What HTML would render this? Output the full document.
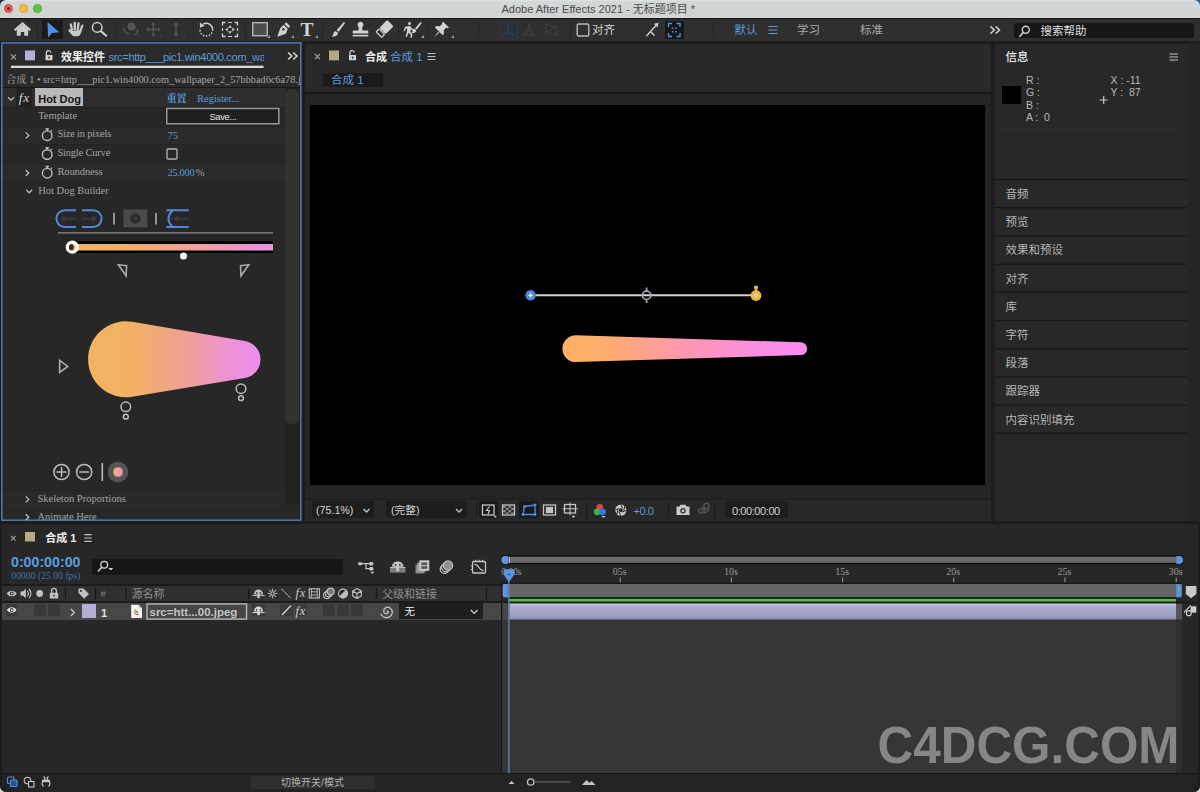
<!DOCTYPE html>
<html lang="zh">
<head>
<meta charset="utf-8">
<title>Adobe After Effects 2021</title>
<style>
*{margin:0;padding:0;box-sizing:border-box}
html,body{width:1200px;height:792px;overflow:hidden;background:#1c1c1c}
body{position:relative;font-family:"Liberation Sans","Noto Sans CJK SC",sans-serif;font-size:11px;color:#b4b4b4;line-height:1}
.a{position:absolute}
.t{position:absolute;white-space:nowrap;line-height:14px;height:14px}
.serif{font-family:"Liberation Serif","Noto Serif CJK SC",serif}
.blue{color:#5b9bd9}
.w{color:#e6e6e6}
svg{position:absolute;overflow:visible}
/* title bar */
#titlebar{left:0;top:0;width:1200px;height:18px;background:linear-gradient(#e4e6e6 0,#d4d7d7 1.500px,#cfd2d2 16px,#dadcdc 17px);border-radius:6px 6px 0 0}
#deskL{left:0;top:0;width:8px;height:8px;background:#1d2f55}
#deskR{left:1192px;top:0;width:8px;height:8px;background:#2b5ca4}
.tl{position:absolute;top:4.300px;width:9px;height:9px;border-radius:50%}
#toolbar{left:0;top:18px;width:1200px;height:22.700px;background:#2f2f2f;border-top:1.200px solid #121212}
/* panels */
.panel{position:absolute;background:#262626}
/* SECTION-MARKERS */
</style>
</head>
<body>
<!-- ===== TITLE BAR ===== -->
<div class="a" id="deskL"></div><div class="a" id="deskR"></div>
<div class="a" id="titlebar">
  <div class="tl" style="left:4.300px;background:#ee5b54;border:0.5px solid #d2453f"></div>
  <div class="tl" style="left:18.600px;background:#f6bd3c;border:0.5px solid #d8a02c"></div>
  <div class="tl" style="left:32.700px;background:#5fc544;border:0.5px solid #4aa632"></div>
  <div class="a" style="left:7.1px;top:7.1px;width:3.4px;height:3.4px;border-radius:50%;background:#7a1c14"></div>
  <div class="t" style="left:-1.700px;width:1200px;text-align:center;top:2px;font-size:11px;color:#4b4b4b">Adobe After Effects 2021 - 无标题项目 *</div>
</div>
<!-- ===== TOOLBAR ===== -->
<div class="a" id="toolbar"></div>
<!--TB-START-->
<div class="a" style="left:42px;top:20px;width:21px;height:19px;background:#1a1a1a"></div>
<div class="a" style="left:665px;top:21px;width:19px;height:18px;background:#171717"></div>
<div class="a" style="left:499.500px;top:21px;width:18px;height:18px;background:#2b3036;border:1px solid #303843"></div>
<div class="a" style="left:1014px;top:22.700px;width:180px;height:15px;background:#171717;border-radius:2px"></div>
<svg style="left:0;top:18px" width="1200" height="24" viewBox="0 18 1200 24" fill="none">
  <!-- grip -->
  <g stroke="#3a3a3a" stroke-width="1"><path d="M5.5 21v17" stroke-dasharray="1 1"/></g>
  <!-- separators -->
  <g stroke="#242424" stroke-width="1">
    <path d="M37.5 21v18M115.5 21v18M193.5 21v18M245.5 21v18M322.5 21v18M398.5 21v18M427.5 21v18M478.5 21v18M570.5 21v18M713.5 21v18"/>
  </g>
  <!-- home -->
  <g fill="#cdcdcd">
    <path d="M22.5 22l8.600 7.400-1.500 1.700-7.100-6.100-7.100 6.100-1.500-1.700z"/>
    <path d="M16.800 29.600l5.700-4.900 5.700 4.900v6.100h-4v-3.800h-3.400v3.800h-4z"/>
  </g>
  <!-- select arrow -->
  <path d="M47.500 21.800l11.700 10.400-7.200.8-4 4.800z" fill="#4c8fea"/>
  <!-- hand -->
  <g fill="#c9c9c9" transform="translate(-.7 -.5)">
    <rect x="71.6" y="23.6" width="2.3" height="8" rx="1.1" transform="rotate(-12 72.7 31)"/>
    <rect x="74.3" y="22.2" width="2.3" height="9" rx="1.1"/>
    <rect x="77.1" y="22.6" width="2.3" height="9" rx="1.1" transform="rotate(8 78.2 31)"/>
    <rect x="79.8" y="24.6" width="2.2" height="8" rx="1.1" transform="rotate(20 81 32)"/>
    <path d="M70.3 29.8c1.4-.6 2.4.6 3 1.8l8.8-1.2c0 3-1.2 5.8-3.4 6.4h-4.2c-1.8-.8-3.6-3.6-5.4-5.4-.5-.6.3-1.3 1.2-1.6z"/>
  </g>
  <!-- magnifier -->
  <g stroke="#cfcfcf"><circle cx="97.200" cy="27.400" r="4.800" stroke-width="1.500"/><path d="M100.900 31.100l5.300 4.600" stroke-width="2.100" stroke-linecap="round"/></g>
  <!-- orbit (dim) -->
  <g stroke="#555555" stroke-width="1.4" fill="none">
    <circle cx="131.5" cy="26.5" r="3.4" fill="#555555"/>
    <path d="M124 27.5c-1 3 1 6 5 6.5M137 29c1.6 2.4.4 5-2.6 6"/>
    <path d="M138 37l1.8-1.8v1.8z" fill="#555555" stroke="none"/>
  </g>
  <!-- move (dim) -->
  <g stroke="#555555" stroke-width="1.6" fill="#555555">
    <path d="M153.3 24.5v10M148.3 29.5h10" />
    <path d="M153.3 22l2.4 3h-4.8zM153.3 37l2.4-3h-4.8zM145.8 29.5l3-2.4v4.8zM160.8 29.5l-3-2.4v4.8z" stroke="none"/>
    <path d="M160 37.2l1.8-1.8v1.8z" stroke="none"/>
  </g>
  <!-- vertical (dim) -->
  <g stroke="#555555" stroke-width="1.6" fill="#555555">
    <path d="M176 25v9"/>
    <path d="M176 22l2.6 3.4h-5.2zM176 37l2.6-3.4h-5.2z" stroke="none"/>
    <path d="M183 37.2l1.8-1.8v1.8z" stroke="none"/>
  </g>
  <!-- rotate -->
  <g stroke="#cfcfcf" stroke-width="1.5" fill="none">
    <path d="M203 24.2a6.3 6.3 0 0 1 9.6 5.4"/>
    <path d="M212.6 29.6a6.3 6.3 0 1 1-12.4-1.4" stroke-dasharray="1.4 1.6"/>
    <path d="M199.8 22.6l.3 5 4.6-1.6z" fill="#cfcfcf" stroke="none"/>
  </g>
  <!-- pan behind -->
  <g stroke="#cfcfcf" stroke-width="1.3" fill="none">
    <path d="M222.5 25.5v-3h3M234.5 22.5h3v3M237.5 33.500v3h-3M225.5 36.5h-3v-3"/>
    <path d="M228 22.5h4M228 36.5h4M222.500 28v3M237.5 28v3" stroke-width="1.2"/>
    <path d="M230 25.2l2 2.500h-4zM230 33.800l2-2.500h-4zM225.200 29.500l2.500-2v4zM234.800 29.500l-2.500-2v4z" fill="#cfcfcf" stroke="none"/>
  </g>
  <!-- rect -->
  <rect x="252.700" y="22.700" width="14.600" height="13" fill="#4d4d4d" stroke="#bdbdbd" stroke-width="1.3"/>
  <path d="M267 38l3-3v3z" fill="#a0a0a0"/>
  <!-- pen -->
  <g fill="#d2d2d2">
    <path d="M286.200 22.200l4 4-1.700 1.700-4-4z"/>
    <path d="M283.600 24.800l4.200 4.200-2 4.800-8.600 3 3-8.600zM283.400 30.600a1.300 1.300 0 1 0-.1 0z" fill-rule="evenodd"/>
    <path d="M291 38l3-3v3z" fill="#a0a0a0"/>
  </g>
  <!-- T -->
  
  <path d="M315 38l3-3v3z" fill="#a0a0a0"/>
  <!-- brush -->
  <g fill="#d2d2d2">
    <path d="M343.800 22l1.400 1-6.600 8.800-2-1.500z"/>
    <path d="M335.900 31.200l2 1.600c.2 2.400-2.400 4.200-6.200 3.800 1.600-1 1.400-2.200 1.800-3.600.4-1.300 1.400-1.900 2.400-1.800z"/>
  </g>
  <!-- stamp -->
  <g fill="#d2d2d2">
    <path d="M360.500 21.800a2.900 2.900 0 0 1 2.200 4.800c-.6.800-.6 2.600-.2 4h4.600c.8 0 1.200.5 1.200 1.200v1.800h-15.600v-1.800c0-.7.400-1.200 1.200-1.200h4.600c.4-1.400.4-3.200-.2-4a2.900 2.900 0 0 1 2.200-4.800z"/>
    <rect x="352.700" y="34.800" width="15.600" height="1.600"/>
  </g>
  <!-- eraser -->
  <g>
    <g transform="rotate(45 384.200 29.300)"><rect x="379.700" y="20.600" width="9" height="11" rx="1.200" fill="#d2d2d2"/><rect x="380.300" y="32.600" width="7.800" height="4.200" rx=".9" fill="none" stroke="#d2d2d2" stroke-width="1.200"/></g>
    
  </g>
  <!-- roto -->
  <g fill="#d2d2d2">
    <circle cx="409.500" cy="23.600" r="1.500"/>
    <path d="M406 26.500l4-.6 2.600 3 2.400.2v1.300l-3-.2-1.300-1.300-.3 3 2 2.400-.6 3.400h-1.300l.3-3-2.200-2-1.800 4.400-1.300-.4 1.400-4.800.3-3.600-1.600.6-.6 2.400-1.200-.3.700-3.200z"/>
    <path d="M420.600 22l1.200.9-5 6.600-1.700-1.300z"/>
    <path d="M414.600 28.800l1.600 1.300c.2 2-1.800 3.400-4.800 3 1.200-.8 1-1.700 1.400-2.800.3-1 1-1.600 1.800-1.500z"/>
    <path d="M421 38l3-3v3z" fill="#a0a0a0"/>
  </g>
  <!-- pin -->
  <g fill="#d2d2d2">
    <path d="M443.400 22l5.600 5.600-1.400.6-1.500-.4-2.400 2.600.3 3.300-1.400 1.400-7.700-7.700 1.400-1.400 3.300.3 2.600-2.400-.4-1.500z"/>
    <path d="M438.400 31.800l.9.900-5.300 4.300z"/>
    <path d="M451 38l3-3v3z" fill="#a0a0a0"/>
  </g>
  <!-- axis icons (dim blue) -->
  <g stroke="#2c435e" stroke-width="1.100" fill="none">
    <path d="M508 24v7.500M508 31.500l-5.500 4M508 31.500l5.500 4"/>
    <path d="M508 22.500l1.800 2.400h-3.600zM501.500 36.300l.8-2.800 2 2.600zM514.500 36.300l-.8-2.800-2 2.600z" fill="#2c435e" stroke="none"/>
  </g>
  <g stroke="#3d4045" stroke-width="1" fill="none">
    <path d="M529 24v7M529 31l-5 4M529 31l5 4M524 35h10l-5-9z"/>
    <path d="M529 22.500l1.800 2.400h-3.600zM522.500 36.300l.8-2.800 2 2.600zM535.500 36.300l-.8-2.800-2 2.600z" fill="#3b3f45" stroke="none"/>
    <path d="M545.500 24.500l11 2.500v8l-11 -2.500zM545.500 32.500l11-6M544 23l3 3" />
  </g>
  <!-- snapping checkbox -->
  <rect x="577.200" y="24" width="11.600" height="12" rx="1.500" stroke="#b9b9b9" stroke-width="1.400"/>
  <!-- snap icon -->
  <g stroke="#cfcfcf" stroke-width="1.400" fill="none"><path d="M646.500 36l4-4.500 4 4M650.500 31.500l6-6.500"/><path d="M658.500 22.800l-1 4.600-3.600-3.600z" fill="#cfcfcf" stroke="none"/></g>
  <!-- bracket icon blue -->
  <g stroke="#4c8fea" stroke-width="1.400" fill="none">
    <path d="M668.500 27v-3.500h3.500M676.500 23.500h3.500v3.500M680 33v3.500h-3.500M672 36.500h-3.500v-3.500"/>
    <path d="M671.800 28.300h1.600M675.200 28.300h1.600M671.800 31.700h1.600M675.200 31.700h1.600" stroke-width="1.600"/>
  </g>
  <!-- workspace menu -->
  <path d="M768.500 26.500h9M768.500 30h9M768.500 33.500h9" stroke="#5b9bd9" stroke-width="1.200"/>
  <!-- >> -->
  <path d="M990.500 26.500l3.800 3.500-3.800 3.500M995.700 26.500l3.800 3.500-3.800 3.500" stroke="#d8d8d8" stroke-width="1.500"/>
  <!-- search icon -->
  <g stroke="#d0d0d0" stroke-width="1.400"><circle cx="1025.800" cy="29.800" r="3.500"/><path d="M1023.200 32.600l-3.400 3.600" stroke-linecap="round" stroke-width="1.600"/></g>
</svg>
<div class="t serif" style="left:299.800px;top:18.600px;width:14.500px;height:22px;line-height:22px;text-align:center;font-size:19.500px;font-weight:bold;color:#d2d2d2">T</div>
<div class="t" style="left:592px;top:23px;font-size:11.500px;color:#d0d0d0">对齐</div>
<div class="t blue" style="left:734.500px;top:23px;font-size:11.500px">默认</div>
<div class="t" style="left:797px;top:23px;font-size:11.500px;color:#a8a8a8">学习</div>
<div class="t" style="left:860px;top:23px;font-size:11.500px;color:#a8a8a8">标准</div>
<div class="t" style="left:1040.500px;top:23.500px;font-size:11.500px;color:#dedede">搜索帮助</div>
<!--TB-END-->
<!-- ===== LEFT PANEL ===== -->
<!--LP-START-->
<div class="panel" style="left:1px;top:42px;width:300.600px;height:479px;background:#272727;overflow:hidden">
</div><div class="a" style="left:2px;top:43px;width:298.500px;height:44px;background:#2a2a2a"></div>
<div class="a" id="lp" style="left:0;top:0;width:302px;height:521px;overflow:hidden">
  <!-- tab header -->
  <svg style="left:0;top:0" width="302" height="521" viewBox="0 0 302 521" fill="none">
    <path d="M11 54.500l5 5M16 54.500l-5 5" stroke="#9c9c9c" stroke-width="1.100"/>
    <rect x="25" y="50.500" width="10" height="9.800" fill="#b4afd9"/>
    <g fill="#d4d4d4"><rect x="45.500" y="55" width="7" height="5.300" rx=".6"/><path d="M46.400 55.200v-2.100a2.200 2.200 0 0 1 4.400-.5" stroke="#d4d4d4" stroke-width="1.200" fill="none"/><rect x="48.300" y="56.600" width="1.400" height="2" fill="#262626"/></g>
    <path d="M288 52.500l3.800 3.500-3.800 3.500M293.200 52.500l3.800 3.500-3.800 3.500" stroke="#d8d8d8" stroke-width="1.500"/>
    <rect x="11" y="65.700" width="252.500" height="2.300" fill="#d9d9d9"/>
  </svg>
  <div class="t w" style="left:61px;top:49.500px;font-size:11px;font-weight:bold;color:#f0f0f0">效果控件</div>
  <div class="t blue" style="left:108.500px;top:49.500px;font-size:11px;letter-spacing:-.3px;width:155.500px;overflow:hidden">src=<span>http___pic1.win4000.com_wallpaper</span></div>
  <div class="t serif" style="left:6px;top:72.500px;font-size:10.300px;color:#a4a4a4;width:293.500px;overflow:hidden">合成 1 • src=<span>http___pic1.win4000.com_wallpaper_2_57bbbad6c6a78.jpeg</span></div>
  <div class="a" style="left:2px;top:87px;width:298px;height:1px;background:#181818"></div>
  <!-- rows -->
  <div class="a" style="left:2px;top:88px;width:283px;height:19px;background:#2d2d2d"></div>
  <div class="a" style="left:2px;top:126px;width:283px;height:18px;background:#2a2a2a"></div>
  <div class="a" style="left:2px;top:163px;width:283px;height:18.500px;background:#2a2a2a"></div>
  <div class="a" style="left:2px;top:490px;width:283px;height:18px;background:#292929;border-top:1px solid #222"></div>
  <div class="a" style="left:2px;top:508px;width:283px;height:12px;border-top:1px solid #222"></div>
  <div class="a" style="left:2px;top:106.500px;width:283px;height:1px;background:#222"></div><div class="a" style="left:2px;top:125.500px;width:283px;height:1px;background:#222"></div><div class="a" style="left:2px;top:144px;width:283px;height:1px;background:#222"></div><div class="a" style="left:2px;top:162.500px;width:283px;height:1px;background:#222"></div><div class="a" style="left:2px;top:181.500px;width:283px;height:1px;background:#232323"></div>
  <!-- scrollbar -->
  <div class="a" style="left:284.500px;top:88px;width:15.500px;height:416px;background:#212121"></div>
  <div class="a" style="left:285.300px;top:89px;width:14px;height:334.500px;background:#323232;border-radius:6px"></div>
  <!-- hot dog row -->
  <div class="a" style="left:16px;top:88px;width:15.500px;height:18.500px;background:#222"></div>
  <div class="a" style="left:35px;top:88.300px;width:48.200px;height:17.900px;background:#b9b9b9"></div>
  <div class="t" style="left:38.200px;top:92px;font-size:11px;font-weight:bold;color:#141414">Hot Dog</div>
  <div class="t" style="left:18.800px;top:91px;font-size:13.500px;font-style:italic;color:#cfcfcf;font-family:'Liberation Serif',serif;letter-spacing:.6px">fx</div>
  <div class="t serif blue" style="left:166.500px;top:91.500px;font-size:10px;font-weight:bold">重置</div>
  <div class="t serif blue" style="left:197px;top:91.500px;font-size:10.500px">Register...</div>
  <div class="t serif" style="left:38.200px;top:108.500px;font-size:10.500px;color:#a3a3a3">Template</div>
  <div class="a" style="left:166px;top:107.700px;width:113.600px;height:16.800px;background:#1f1f1f"></div>
  <div class="t" style="left:166px;width:113.600px;text-align:center;top:109.800px;font-size:9.500px;letter-spacing:-.4px;color:#e2e2e2">Save...</div>
  <div class="t serif" style="left:57.400px;top:127px;font-size:10.500px;letter-spacing:-.2px;color:#a3a3a3">Size in pixels</div>
  <div class="t serif blue" style="left:167.400px;top:128.500px;font-size:10.500px">75</div>
  <div class="t serif" style="left:57.400px;top:146px;font-size:10.500px;letter-spacing:-.2px;color:#a3a3a3">Single Curve</div>
  <div class="t serif" style="left:57.400px;top:164.500px;font-size:10.500px;letter-spacing:-.1px;color:#a3a3a3">Roundness</div>
  <div class="t serif blue" style="left:167.400px;top:166px;font-size:10.500px;letter-spacing:-.3px">25.000<span style="color:#a3a3a3;margin-left:1.200px">%</span></div>
  <div class="t serif" style="left:38.200px;top:183.500px;font-size:10.500px;color:#a3a3a3">Hot Dog Builder</div>
  <div class="t serif" style="left:37.500px;top:491.500px;font-size:10.500px;color:#a3a3a3">Skeleton Proportions</div>
  <div class="t serif" style="left:37.500px;top:509.500px;font-size:10.500px;color:#a3a3a3">Animate Here</div>
  <svg style="left:0;top:0" width="302" height="521" viewBox="0 0 302 521" fill="none">
    <defs>
      <linearGradient id="hg" x1="88" y1="0" x2="260.500" y2="0" gradientUnits="userSpaceOnUse">
        <stop offset="0" stop-color="#f3b361"/><stop offset=".25" stop-color="#f2b064"/><stop offset=".55" stop-color="#f0a193"/><stop offset=".85" stop-color="#ec91dc"/><stop offset="1" stop-color="#ec8eea"/>
      </linearGradient>
      <linearGradient id="bg1" x1="72" y1="0" x2="273" y2="0" gradientUnits="userSpaceOnUse">
        <stop offset="0" stop-color="#f3b060"/><stop offset=".3" stop-color="#f2ad6c"/><stop offset=".6" stop-color="#f0a09a"/><stop offset="1" stop-color="#ec8fe4"/>
      </linearGradient>
      <linearGradient id="dot" x1="0" y1="0" x2="1" y2="0"><stop offset="0" stop-color="#f2b070"/><stop offset="1" stop-color="#ee96c8"/></linearGradient>
    </defs>
    <rect x="1.800" y="42.800" width="299" height="477.400" stroke="#4d73ad" stroke-width="1.600"/>
    <rect x="166.750" y="108.450" width="112.100" height="15.300" stroke="#979797" stroke-width="1.500"/>
    <!-- chevrons -->
    <g stroke="#bdbdbd" stroke-width="1.300">
      <path d="M8 97.200l3 3 3-3"/>
      <path d="M25.800 132.400l3 3-3 3"/>
      <path d="M25.800 170l3 3-3 3"/>
      <path d="M26.200 189.800l3 3 3-3"/>
      <path d="M25.800 496.400l3 3-3 3"/>
      <path d="M25.800 514.300l3 3-3 3"/>
    </g>
    <!-- stopwatches -->
    <g stroke="#bdbdbd" stroke-width="1.400">
      <circle cx="47.200" cy="135.700" r="4.800"/><path d="M45.500 129h3.400M47.200 129v1.900M50.900 131.300l1-1"/>
      <circle cx="47.200" cy="154.500" r="4.800"/><path d="M45.500 147.800h3.400M47.200 147.800v1.900M50.900 150.100l1-1"/>
      <circle cx="47.200" cy="173.200" r="4.800"/><path d="M45.500 166.500h3.400M47.200 166.500v1.900M50.900 168.800l1-1"/>
    </g>
    <rect x="167" y="149" width="10" height="10" rx="1" stroke="#b4b4b4" stroke-width="1.300"/>
    <!-- builder icons -->
    <g stroke="#3a3a3a" stroke-width="1.500"><path d="M64 218.700h12M82 218.700h11M170 218.700h18"/><circle cx="63.500" cy="218.700" r="1.800" fill="#3a3a3a"/><circle cx="93.500" cy="218.700" r="1.800" fill="#3a3a3a"/><circle cx="177" cy="218.700" r="1.600" fill="#3a3a3a"/></g>
    <g stroke="#5289d6" stroke-width="2">
      <path d="M76 210.200H64.800a8.400 8.400 0 0 0 0 16.800H76"/>
      <path d="M82 210.200h11.200a8.400 8.400 0 0 1 0 16.800H82"/>
      <path d="M188.800 210.200H166.300M166.300 227h22.500M172.500 210.200q-8 8.400 0 16.800"/>
    </g>
    <path d="M114 213v11.500M156 213v11.500" stroke="#b8b8b8" stroke-width="1.500"/>
    <rect x="123.500" y="209.500" width="23.800" height="17.700" fill="#4b4b4b"/>
    <circle cx="135.400" cy="218.400" r="5.200" fill="#2c2c2c"/><circle cx="135.400" cy="218.400" r="2" fill="#3d3d3d"/>
    <path d="M58 232.800h215" stroke="#8c8c8c" stroke-width="1.300"/>
    <!-- gradient bar -->
    <rect x="70" y="241.300" width="203" height="11.700" fill="#000"/>
    <rect x="72" y="244" width="201" height="6.500" fill="url(#bg1)"/>
    <circle cx="72.300" cy="247.200" r="6.600" fill="#fff"/>
    <circle cx="72.300" cy="247.200" r="3.300" fill="#f0b070"/>
    <path d="M72.300 243.900a3.300 3.300 0 0 0 0 6.600a5 5 0 0 0 0-6.600z" fill="#3a2a1c"/>
    <circle cx="183.500" cy="256" r="3.500" fill="#fff"/>
    <g stroke="#ababab" stroke-width="1.300" stroke-linejoin="miter">
      <path d="M118.300 264.700l8.300.9-.5 10.200z" stroke-width="1.600"/>
      <path d="M248.800 264.700l-8.300.9.500 10.200z" stroke-width="1.600"/>
      <path d="M59.700 360.400v12l8-6z" stroke-width="1.700"/>
    </g>
    <!-- big hot dog -->
    <path d="M132.200 321.800L244.800 341A18.750 18.750 0 0 1 244.800 378L132.200 396.800A38 38 0 1 1 132.200 321.800Z" fill="url(#hg)"/>
    <g stroke="#bcbcbc" stroke-width="1.500">
      <circle cx="125.800" cy="406.800" r="4.800"/><circle cx="125.800" cy="416.700" r="2.400"/>
      <circle cx="241" cy="388.700" r="4.800"/><circle cx="241" cy="398.200" r="2.400"/>
    </g>
    <!-- bottom icons -->
    <g stroke="#bcbcbc" stroke-width="1.500">
      <circle cx="61.500" cy="472" r="7.600"/><path d="M56.500 472h10M61.500 467v10"/>
      <circle cx="84.200" cy="472" r="7.600"/><path d="M79.200 472h10"/>
      <path d="M102.300 463v18" stroke-width="1.600"/>
    </g>
    <circle cx="118" cy="472" r="10.300" fill="#555"/>
    <circle cx="118" cy="472" r="4.800" fill="url(#dot)"/>
  </svg>
</div>
<!--LP-END-->
<!-- ===== COMP PANEL ===== -->
<!--CP-START-->
<div class="panel" style="left:304.600px;top:43.500px;width:686.400px;height:477.500px;background:#292929"></div>
<div class="a" style="left:304.600px;top:92px;width:686.400px;height:1.500px;background:#171717"></div>
<div class="a" style="left:304.600px;top:93.500px;width:686.400px;height:405.500px;background:#242424"></div><div class="a" style="left:304.600px;top:499px;width:686.400px;height:1.200px;background:#1d1d1d"></div>
<div class="a" style="left:310px;top:105px;width:675px;height:380px;background:#000"></div>
<div class="a" style="left:323px;top:72.500px;width:60px;height:14.500px;background:#1b1b1b"></div>
<div class="t" style="left:365px;top:49.500px;font-size:11px;font-weight:bold;color:#f0f0f0">合成</div>
<div class="t blue" style="left:390px;top:49.500px;font-size:11.500px">合成 1</div>
<div class="t blue" style="left:331px;top:72.500px;font-size:11.500px">合成 1</div>
<!-- footer -->
<div class="a" style="left:304.600px;top:500.200px;width:686.400px;height:20.800px;background:#282828"></div>
<div class="a" style="left:311.500px;top:501.300px;width:62px;height:16.500px;background:#1d1d1d;border-radius:2px"></div>
<div class="a" style="left:386px;top:501.300px;width:81px;height:16.500px;background:#1d1d1d;border-radius:2px"></div>
<div class="a" style="left:479px;top:501.300px;width:19px;height:16.500px;background:#1a1a1a"></div>
<div class="a" style="left:519px;top:501.300px;width:20px;height:16.500px;background:#1a1a1a"></div>
<div class="a" style="left:725px;top:501.300px;width:63px;height:16.500px;background:#1d1d1d;border-radius:2px"></div>
<div class="t" style="left:316px;top:502.800px;font-size:10.700px;color:#d6d6d6">(75.1%)</div>
<div class="t" style="left:391px;top:502.500px;font-size:10.700px;color:#d6d6d6">(完整)</div>
<div class="t blue" style="left:633.500px;top:504px;font-size:11px;letter-spacing:-.42px">+0.0</div>
<div class="t" style="left:732px;top:504px;font-size:11px;letter-spacing:-.42px;color:#d0d0d0">0:00:00:00</div>
<svg style="left:0;top:0" width="1200" height="530" viewBox="0 0 1200 530" fill="none">
  <defs>
    <linearGradient id="cg" x1="562" y1="0" x2="807" y2="0" gradientUnits="userSpaceOnUse">
      <stop offset="0" stop-color="#feb160"/><stop offset=".2" stop-color="#feab70"/><stop offset=".5" stop-color="#fe98b0"/><stop offset=".8" stop-color="#fc8ee0"/><stop offset="1" stop-color="#fb8af2"/>
    </linearGradient>
  </defs>
  <!-- tab header icons -->
  <path d="M315 54l5 5M320 54l-5 5" stroke="#9c9c9c" stroke-width="1.100"/>
  <rect x="329" y="50.500" width="10" height="9.800" fill="#b5a684"/>
  <g fill="#d4d4d4"><rect x="349" y="55" width="7" height="5.300" rx=".6"/><path d="M349.900 55.200v-2.100a2.200 2.200 0 0 1 4.400-.5" stroke="#d4d4d4" stroke-width="1.200" fill="none"/><rect x="351.800" y="56.600" width="1.400" height="2" fill="#262626"/></g>
  <path d="M427.500 53.500h8M427.500 56.500h8M427.500 59.500h8" stroke="#bdbdbd" stroke-width="1.100"/>
  <!-- comp content -->
  <path d="M530.600 295.300H756" stroke="#d2d2d2" stroke-width="2"/>
  <circle cx="530.600" cy="295.300" r="5.200" fill="#4b8ad3"/>
  <path d="M530.600 292.300l.9 2.100 2.100.9-2.100.9-.9 2.100-.9-2.100-2.100-.9 2.100-.9z" fill="#dfeaf6"/>
  <g stroke="#a4a8b4" stroke-width="1.700" fill="none"><circle cx="646.600" cy="295.300" r="4.200"/><path d="M646.600 287.500v4M646.600 299.100v4"/></g>
  <circle cx="756" cy="295.500" r="5.400" fill="#f0b840"/>
  <circle cx="756" cy="287.600" r="2.100" fill="#f0b840"/><rect x="754.900" y="287.600" width="2.200" height="4" fill="#f0b840"/>
  <circle cx="756" cy="295.500" r="2" fill="#d8d2c0"/>
  <path d="M575.800 335.300L800.800 342.300A6.400 6.400 0 0 1 800.800 355.100L575.800 362.100A13.400 13.400 0 1 1 575.800 335.300Z" fill="url(#cg)"/>
  <!-- footer icons -->
  <g stroke="#c4c4c4" stroke-width="1.300">
    <path d="M363.500 509l3 3 3-3M456 509l3 3 3-3"/>
    <!-- fast preview -->
    <rect x="482.500" y="505" width="11.500" height="10" />
    <path d="M489.500 506.500l-3 4h3l-1.500 3.500" stroke-width="1.200"/>
    <path d="M494 516l2.500 0-1.250 1.500z" fill="#c4c4c4" stroke-width=".5"/>
    <!-- transparency grid -->
    <rect x="502.500" y="505" width="12" height="10"/>
    <!-- region of interest -->
    <rect x="543.500" y="505" width="12" height="10"/><rect x="546.500" y="507.500" width="6" height="5" fill="#c4c4c4"/>
    <!-- grid -->
    <rect x="564.500" y="504.500" width="11" height="8.500"/><path d="M570 502.500v12.500M562.500 508.800h15" stroke-width="1.100"/>
    <path d="M572 516l3 0-1.500 1.800z" fill="#c4c4c4" stroke-width=".5"/>
  </g>
  <g fill="#8a8a8a"><rect x="503" y="505.500" width="2.700" height="2.300"/><rect x="508.400" y="505.500" width="2.700" height="2.300"/><rect x="505.700" y="507.800" width="2.700" height="2.300"/><rect x="511.100" y="507.800" width="2.700" height="2.300"/><rect x="503" y="510.100" width="2.700" height="2.300"/><rect x="508.400" y="510.100" width="2.700" height="2.300"/><rect x="505.700" y="512.400" width="2.700" height="2.300"/><rect x="511.100" y="512.400" width="2.700" height="2.300"/></g>
  <!-- mask toggle (blue) -->
  <g stroke="#4c8fea" stroke-width="1.300"><path d="M524.500 506.500l10.500-1.500v9.500l-12 0z"/><path d="M523 514.500h0M524.500 506.500h0M535 505h0M535 514.500h0" stroke-width="2.600" stroke-linecap="square"/></g>
  <!-- channel RGB -->
  <circle cx="599.800" cy="507.500" r="3.400" fill="#e0463c"/><circle cx="597.200" cy="511.800" r="3.400" fill="#3db14b"/><circle cx="602.500" cy="511.800" r="3.400" fill="#3f74e8"/>
  <path d="M601.500 516l4 0-2 2z" fill="#c4c4c4"/>
  <!-- aperture -->
  <g><circle cx="620.800" cy="510.200" r="5.600" fill="#c9c9c9"/><circle cx="620.800" cy="510.200" r="2" fill="#262626"/><path d="M620.800 504.600l2 4M626.400 510.200l-4 1.800M620.800 515.800l-2-4M615.200 510.200l4-1.800M624.800 506.200l-1 4.200M616.800 514.200l1-4.200" stroke="#262626" stroke-width="1"/></g>
  <path d="M668.500 502.500v16M714.500 502.500v16M476.500 502.500v16M586.500 502.500v16" stroke="#1a1a1a" stroke-width="1"/>
  <!-- camera -->
  <g fill="#c9c9c9"><path d="M676.500 506.500h3l1-1.700h5l1 1.700h3v8.500h-13z"/><circle cx="683" cy="510.700" r="2.700" fill="#262626"/><circle cx="683" cy="510.700" r="1.500"/></g>
  <!-- disabled show snapshot -->
  <g stroke="#555555" stroke-width="1.300"><path d="M698 511c2-3.500 7-4.500 10.500-1-2.500 3.500-7.500 4.500-10.500 1z"/><circle cx="703.500" cy="510.500" r="1.500"/><circle cx="706.500" cy="506" r="2.600"/></g>
</svg>
<!--CP-END-->
<!-- ===== RIGHT PANEL ===== -->
<!--RP-START-->
<div class="panel" style="left:994.500px;top:44px;width:193.500px;height:477px;background:#282828"></div>
<div class="a" style="left:1188px;top:43px;width:12px;height:478px;background:#242424"></div>
<div class="t" style="left:1005.500px;top:49.500px;font-size:11.500px;color:#ececec;font-weight:500">信息</div>
<div class="a" style="left:1002px;top:85.500px;width:19px;height:18.500px;background:#000"></div>
<div class="t" style="left:1026px;top:72.500px;font-size:10.500px;color:#b9b9b9;">R :</div>
<div class="t" style="left:1026px;top:85px;font-size:10.500px;color:#b9b9b9;">G :</div>
<div class="t" style="left:1026px;top:97.500px;font-size:10.500px;color:#b9b9b9;">B :</div>
<div class="t" style="left:1026px;top:110px;font-size:10.500px;color:#b9b9b9;">A :&nbsp; 0</div>
<div class="t" style="left:1110.500px;top:72.500px;font-size:10.500px;color:#b9b9b9;">X : -11</div>
<div class="t" style="left:1110.500px;top:85px;font-size:10.500px;color:#b9b9b9;">Y :&nbsp; 87</div>
<div class="a" style="left:1090px;top:76px;width:1px;height:47px;background:#2c2c2c"></div>
<div class="a" style="left:1000px;top:129px;width:180px;height:1px;background:#303030"></div>
<svg style="left:995px;top:44px" width="192" height="477" viewBox="995 44 192 477" fill="none">
  <path d="M1169.500 54h8.500M1169.500 57h8.500M1169.500 60h8.500" stroke="#c2c2c2" stroke-width="1.100"/>
  <path d="M1099.700 100h8M1103.700 96v8" stroke="#c8c8c8" stroke-width="1.200"/>
  <g stroke="#181818" stroke-width="1.400">
    <path d="M995 179.500h192M995 207.700h192M995 235.900h192M995 264.100h192M995 292.300h192M995 320.500h192M995 348.700h192M995 376.900h192M995 405.100h192M995 433.300h192"/>
  </g>
</svg>
<div class="t" style="left:1005.500px;top:187px;font-size:11.500px;color:#b6b6b6">音频</div>
<div class="t" style="left:1005.500px;top:215.200px;font-size:11.500px;color:#b6b6b6">预览</div>
<div class="t" style="left:1005.500px;top:243.400px;font-size:11.500px;color:#b6b6b6">效果和预设</div>
<div class="t" style="left:1005.500px;top:271.600px;font-size:11.500px;color:#b6b6b6">对齐</div>
<div class="t" style="left:1005.500px;top:299.800px;font-size:11.500px;color:#b6b6b6">库</div>
<div class="t" style="left:1005.500px;top:328px;font-size:11.500px;color:#b6b6b6">字符</div>
<div class="t" style="left:1005.500px;top:356.200px;font-size:11.500px;color:#b6b6b6">段落</div>
<div class="t" style="left:1005.500px;top:384.400px;font-size:11.500px;color:#b6b6b6">跟踪器</div>
<div class="t" style="left:1005.500px;top:412.600px;font-size:11.500px;color:#b6b6b6">内容识别填充</div>
<!--RP-END-->
<!-- ===== TIMELINE ===== -->
<!--TL-START-->
<div class="panel" style="left:2px;top:523.500px;width:1195.700px;height:268.500px;background:#272727"></div>
<!-- time graph bg -->
<div class="a" style="left:502.300px;top:603px;width:673.700px;height:170px;background:#363636"></div>
<div class="a" style="left:1176px;top:603px;width:6px;height:170px;background:#2e2e2e"></div><div class="a" style="left:1182px;top:602.200px;width:15.700px;height:1px;background:#161616"></div>
<div class="a" style="left:500.800px;top:582.500px;width:1.500px;height:190.500px;background:#171717"></div>
<!-- header rows -->
<div class="a" style="left:0;top:584px;width:500.800px;height:1.500px;background:#1b1b1b"></div>
<div class="a" style="left:2px;top:585.500px;width:498.800px;height:15.500px;background:#303030"></div>
<div class="a" style="left:0;top:601px;width:500.800px;height:1.700px;background:#1b1b1b"></div>
<div class="a" style="left:2px;top:602.700px;width:498.800px;height:17.300px;background:#474747"></div>
<div class="a" style="left:502.500px;top:602.700px;width:7px;height:17.300px;background:#474747"></div>
<!-- search -->
<div class="a" style="left:92px;top:558.500px;width:250.500px;height:16.500px;background:#161616;border-radius:2px"></div>
<!-- bottom bar -->
<div class="a" style="left:2px;top:773px;width:1195.700px;height:19px;background:#232323;border-top:1.500px solid #151515"></div><div class="a" style="left:0;top:786px;width:6px;height:6px;background:radial-gradient(circle at 100% 0,#1c1c1c 5.500px,#d4d4d4 6.500px)"></div><div class="a" style="left:1194px;top:786px;width:6px;height:6px;background:radial-gradient(circle at 0 0,#1c1c1c 5.500px,#d4d4d4 6.500px)"></div>
<div class="a" style="left:250.500px;top:775.500px;width:124px;height:13.500px;background:#2f2f2f;border-radius:2px"></div>
<div class="t" style="left:250.500px;width:124px;text-align:center;top:775.500px;font-size:10px;color:#b4b4b4">切换开关/模式</div>
<!-- layer row boxes -->
<div class="a" style="left:5.800px;top:604px;width:11.700px;height:12.300px;background:#3b3b3b"></div>
<div class="a" style="left:33.800px;top:604.300px;width:12px;height:12px;background:#393939"></div>
<div class="a" style="left:48px;top:604.300px;width:12px;height:12px;background:#393939"></div>
<div class="a" style="left:81.700px;top:603.800px;width:14px;height:14.200px;background:#b2aed6"></div>
<div class="a" style="left:146.300px;top:603.200px;width:101px;height:16.600px;background:#454545"></div>
<div class="a" style="left:252px;top:604.300px;width:12.500px;height:12px;background:#3b3b3b"></div>
<div class="a" style="left:280px;top:604.300px;width:12.500px;height:12px;background:#3b3b3b"></div>
<div class="a" style="left:294.500px;top:604.300px;width:12.500px;height:12px;background:#3b3b3b"></div>
<div class="a" style="left:323px;top:604.300px;width:11.700px;height:12px;background:#393939"></div>
<div class="a" style="left:337px;top:604.300px;width:11.700px;height:12px;background:#393939"></div>
<div class="a" style="left:351.200px;top:604.300px;width:11.700px;height:12px;background:#393939"></div>
<div class="a" style="left:398.700px;top:603.300px;width:84px;height:16px;background:#1e1e1e"></div>
<!-- texts -->
<div class="t" style="left:45.300px;top:531px;font-size:11px;font-weight:bold;color:#f0f0f0">合成 1</div>
<div class="t" style="left:11px;top:554px;height:17px;line-height:17px;font-size:14.200px;font-weight:bold;color:#5b9ee2;letter-spacing:0">0:00:00:00</div>
<div class="t serif" style="left:11.300px;top:568.500px;font-size:9.700px;color:#4273ad">00000 (25.00 fps)</div>
<div class="t" style="left:100.500px;top:587px;font-size:9.500px;color:#8c8c8c;font-style:italic">#</div>
<div class="t" style="left:131.500px;top:586.500px;font-size:11px;color:#8f8f8f">源名称</div>
<div class="t" style="left:382px;top:586.500px;font-size:11px;color:#8f8f8f">父级和链接</div>
<div class="t" style="left:101px;top:605.500px;font-size:11px;font-weight:bold;color:#e2e2e2">1</div>
<div class="t" style="left:149.500px;top:605px;font-size:11.500px;font-weight:bold;color:#c4c4c4">src=<span>htt...00.jpeg</span></div>
<div class="t" style="left:404.500px;top:604px;font-size:10.500px;color:#f0f0f0">无</div>
<div class="t" style="left:295.500px;top:586px;font-size:12.500px;font-style:italic;color:#c8c8c8;font-family:'Liberation Serif',serif;letter-spacing:.8px">fx</div>
<div class="t" style="left:295.500px;top:603.500px;font-size:12.500px;font-style:italic;color:#d4d4d4;font-family:'Liberation Serif',serif;letter-spacing:.8px">fx</div>
<!-- ruler labels -->
<div class="t serif" style="left:501.300px;top:565.200px;font-size:9.300px;color:#9a9a9a;width:24px">0:00s</div>
<div class="t serif" style="left:599.700px;width:40px;text-align:center;top:565px;font-size:10px;color:#9a9a9a">05s</div>
<div class="t serif" style="left:710.900px;width:40px;text-align:center;top:565px;font-size:10px;color:#9a9a9a">10s</div>
<div class="t serif" style="left:822.100px;width:40px;text-align:center;top:565px;font-size:10px;color:#9a9a9a">15s</div>
<div class="t serif" style="left:933.300px;width:40px;text-align:center;top:565px;font-size:10px;color:#9a9a9a">20s</div>
<div class="t serif" style="left:1044.500px;width:40px;text-align:center;top:565px;font-size:10px;color:#9a9a9a">25s</div>
<div class="t serif" style="left:1155.700px;width:40px;text-align:center;top:565px;font-size:10px;color:#9a9a9a">30s</div>
<svg style="left:0;top:524px" width="1200" height="268" viewBox="0 524 1200 268" fill="none">
  <defs>
    <linearGradient id="lb" x1="0" y1="604" x2="0" y2="619.500" gradientUnits="userSpaceOnUse">
      <stop offset="0" stop-color="#c2c2de"/><stop offset=".2" stop-color="#ababce"/><stop offset=".8" stop-color="#9e9ec2"/><stop offset="1" stop-color="#8b8bae"/>
    </linearGradient>
  </defs>
  <!-- tab icons -->
  <path d="M11 536l4.600 4.600M15.600 536l-4.600 4.600" stroke="#9c9c9c" stroke-width="1.100"/>
  <rect x="25" y="532" width="10" height="9.500" fill="#b8a987"/>
  <path d="M84.300 534.700h7.400M84.300 538h7.400M84.300 541.300h7.400" stroke="#c2c2c2" stroke-width="1.200"/>
  <!-- search icon -->
  <g stroke="#d4d4d4" stroke-width="1.300"><circle cx="104.200" cy="564.700" r="3.400"/><path d="M101.800 567.300l-3.400 3.600" stroke-linecap="round" stroke-width="1.500"/></g>
  <path d="M108.300 568h5l-2.500 2.600z" fill="#d4d4d4"/>
  <!-- timeline toolbar icons -->
  <g stroke="#c6c6c6" stroke-width="1.200" fill="#c6c6c6">
    <path d="M360 563.700h10M366 563.700v5h4" fill="none"/>
    <rect x="358.200" y="562.200" width="3.600" height="3" rx="1" stroke="none"/><rect x="369.300" y="562" width="4" height="3.400" rx="1" stroke="none"/><rect x="369.300" y="567" width="4" height="3.400" rx="1" stroke="none"/>
    <path d="M370.300 571.700h4.200l-2.100 2.200z" stroke="none"/>
  </g>
  <g>
    <rect x="390" y="567.600" width="15.400" height="5" fill="#7d7d7d"/>
    <path d="M392 566.800c0-3.200 2.300-5.300 5.700-5.300s5.700 2.100 5.700 5.300z" fill="#c6c6c6"/>
    <rect x="396.300" y="565.500" width="2.800" height="6" rx="1" fill="#c6c6c6"/>
    <path d="M390 567.400h15.400" stroke="#c6c6c6" stroke-width="1"/>
    <circle cx="395.600" cy="564.800" r=".9" fill="#2a2a2a"/><circle cx="399.800" cy="564.800" r=".9" fill="#2a2a2a"/>
  </g>
  <g>
    <rect x="415.500" y="564.500" width="9" height="9" fill="#8a8a8a"/>
    <rect x="417.500" y="562.500" width="9" height="9" fill="#a8a8a8"/>
    <rect x="419.300" y="560.300" width="10" height="10.500" fill="#c6c6c6"/>
    <rect x="421.300" y="562.500" width="6" height="2.600" fill="#555"/><rect x="421.300" y="566.200" width="6" height="2.600" fill="#555"/>
  </g>
  <g stroke="#c6c6c6" stroke-width="1.200">
    <circle cx="444.500" cy="569" r="4.300" fill="#262626"/><circle cx="446" cy="567.500" r="4.300" fill="#262626"/><circle cx="448" cy="565.500" r="4.600" fill="#8f8f8f"/>
  </g>
  <g stroke="#c6c6c6" stroke-width="1.300">
    <rect x="472.500" y="561.500" width="13" height="11.500" rx="1"/>
    <path d="M474.500 564.300c5 0 4 6.400 9 6.400" stroke-width="1.200"/>
    <path d="M475.500 559.800v1.700M479 559.800v1.700M482.500 559.800v1.700M470.800 566h1.700M470.800 569.500h1.700" stroke-width="1.100"/>
  </g>
  <!-- column header icons -->
  <g fill="#c2c2c2">
    <path d="M6.700 593.500c2.600-3.800 7.400-3.800 10 0-2.600 3.800-7.400 3.800-10 0z"/><circle cx="11.700" cy="593.500" r="2" fill="#303030"/><circle cx="11.700" cy="593.500" r="1" />
    <path d="M20.500 591.500h2.300l3-2.800v9.600l-3-2.800h-2.300z"/>
    <path d="M27.200 590.800c1.500 1.600 1.500 3.800 0 5.400M29 589c2.500 2.600 2.500 6.400 0 9" stroke="#c2c2c2" stroke-width="1.100" fill="none"/>
    <circle cx="39.700" cy="593.500" r="3.400"/>
    <rect x="49.800" y="592.800" width="8.400" height="5.800" rx=".7"/><path d="M51.600 593v-2.200a2.400 2.400 0 0 1 4.800 0v2.200" stroke="#c2c2c2" stroke-width="1.300" fill="none"/><rect x="53.400" y="594.600" width="1.200" height="2.200" fill="#303030"/>
    <path d="M78.500 588.500h5l5.500 5.500-4.800 4.800-5.700-5.700z"/><circle cx="81" cy="591" r="1.100" fill="#303030"/>
  </g>
  <g stroke="#171717" stroke-width="1.300"><path d="M65.500 588v11M95.500 588v11M126.200 588v11M248.700 588v11M376.500 588v11M486.400 588v11"/></g>
  <!-- switches header icons -->
  <g stroke="#c2c2c2" stroke-width="1.100" fill="none">
    <path d="M254 594.600c0-3 1.800-5 4.500-5s4.500 2 4.500 5z" fill="#c2c2c2" stroke="none"/><path d="M252.300 595.600h12.400" stroke-width="1"/><rect x="257.200" y="594" width="2.600" height="4.300" rx=".8" fill="#c2c2c2" stroke="none"/><circle cx="256.700" cy="592.900" r=".8" fill="#303030" stroke="none"/><circle cx="260.300" cy="592.900" r=".8" fill="#303030" stroke="none"/>
    <circle cx="272.500" cy="593.500" r="1.700"/><path d="M272.500 588.800v2M272.500 596.200v2M267.800 593.500h2M275.200 593.500h2M269.200 590.200l1.400 1.400M274.400 595.400l1.400 1.400M275.800 590.200l-1.400 1.400M270.600 595.400l-1.400 1.400"/>
    <path d="M281.500 589l9 9" stroke-dasharray="1.400 1"/>
    <rect x="309.200" y="588.800" width="10.200" height="9.200"/><path d="M311.400 588.800v9.200M317.200 588.800v9.200M311.400 591.800h5.800M311.400 595h5.800" stroke-width=".9"/>
    <circle cx="326.800" cy="595.300" r="3.300"/><circle cx="328.600" cy="593.600" r="3.300"/><circle cx="330.700" cy="591.600" r="3.500" fill="#7a7a7a"/>
    <circle cx="343" cy="593.500" r="4.400"/><path d="M339.900 596.600a4.400 4.400 0 0 0 6.200-6.200z" fill="#c2c2c2"/>
    <path d="M357 588.600l4.300 2.400v5l-4.300 2.500-4.300-2.500v-5zM352.700 591l4.300 2.500 4.300-2.500M357 593.500v5" stroke-width="1.150" stroke-linejoin="round"/>
  </g>
  <rect x="147.050" y="603.950" width="99.500" height="15.100" stroke="#b0b0b0" stroke-width="1.500"/>
  <!-- layer row icons -->
  <g fill="#e6e6e6"><path d="M6.900 610c2.500-3.600 7.100-3.600 9.600 0-2.500 3.600-7.100 3.600-9.600 0z"/><circle cx="11.700" cy="610" r="1.900" fill="#3b3b3b"/><circle cx="11.700" cy="610" r=".9"/></g>
  <path d="M71 609l3.300 3.500-3.300 3.500" stroke="#c6c6c6" stroke-width="1.300"/>
  <path d="M131.200 604.800h7.300l3.500 3.500v9.700h-10.800z" fill="#f4f4f0"/><path d="M138.500 604.800v3.500h3.500z" fill="#c9c9c4"/>
  <path d="M135 609v5" stroke="#d9a21c" stroke-width="1.400"/><path d="M136 611l2 2" stroke="#3a72d8" stroke-width="1.200"/><path d="M135.500 614.500h3" stroke="#d23a2a" stroke-width="1"/>
  <g stroke="#d6d6d6" stroke-width="1.100" fill="none">
    <path d="M254 611.600c0-3 1.800-5 4.500-5s4.500 2 4.500 5z" fill="#d6d6d6" stroke="none"/><path d="M252.300 612.600h12.400" stroke-width="1"/><rect x="257.200" y="611" width="2.600" height="4.300" rx=".8" fill="#d6d6d6" stroke="none"/><circle cx="256.700" cy="609.900" r=".8" fill="#3b3b3b" stroke="none"/><circle cx="260.300" cy="609.900" r=".8" fill="#3b3b3b" stroke="none"/>
    <path d="M282 615l9-9.500" stroke-width="1.300"/>
  </g>
  <path transform="translate(387 611.400) scale(1.220) translate(-387 -611.400)" d="M386.600 611.400c.8-.8 2 .3 1.200 1.300-1.100 1.400-3.500.4-3.500-1.700 0-2.500 3-3.900 5.200-2.400 2.500 1.700 2.400 5.300 0 7-2.600 1.800-6.400.8-7.600-2.200" stroke="#c8c8c8" stroke-width="1" fill="none"/>
  <path d="M470.800 610l3.400 3.400 3.400-3.400" stroke="#d6d6d6" stroke-width="1.300"/>
  <!-- work area -->
  <rect x="502" y="556" width="680" height="7.600" fill="#6c6c6c" stroke="#0e0e0e" stroke-width="1.500"/><path d="M509.400 557.100v6" stroke="#c8c8c8" stroke-width=".8"/>
  <path d="M507.800 555.900h-2.400a4.100 4.100 0 0 0 0 8.200h2.400z" fill="#5b96e6"/>
  <path d="M1176.500 555.900h2.400a4.100 4.100 0 0 1 0 8.200h-2.400z" fill="#5b96e6"/>
  <!-- ticks -->
  <path d="M620.200 577.500v4.800M731.400 577.500v4.800M842.600 577.500v4.800M953.800 577.500v4.800M1065 577.500v4.800M1176.200 577.500v4.800" stroke="#a0a0a0" stroke-width="1"/>
  <!-- navigator -->
  <rect x="503" y="583.700" width="679" height="13.600" fill="#656565"/>
  <path d="M502.500 583.100h680" stroke="#121212" stroke-width="1.200"/>
  <path d="M507.600 583.900h-2.200a2.800 2.800 0 0 0-2.800 2.800v7.800a2.800 2.800 0 0 0 2.800 2.800h2.200z" fill="#5b96e6"/>
  <path d="M1176.400 583.900h2.200a2.800 2.800 0 0 1 2.800 2.800v7.800a2.800 2.800 0 0 1-2.800 2.800h-2.200z" fill="#5b96e6"/>
  <rect x="509" y="597.300" width="667" height="5.700" fill="#0f1f0b"/><rect x="509" y="598.900" width="667" height="2.700" fill="#58bd46"/>
  <path d="M502.500 602.400h680" stroke="#161616" stroke-width="1"/>
  <!-- layer bar -->
  <rect x="509.400" y="603.500" width="666.600" height="16" fill="url(#lb)"/>
  <rect x="1176" y="604" width="6" height="15.500" fill="#565656"/>
  <!-- playhead -->
  <path d="M508.900 575v198" stroke="#5f8ed2" stroke-width="1.200"/>
  <path d="M504.700 569.300h8.600a1 1 0 0 1 1 1v4.200l-5.400 7.700-5.200-7.700v-4.200a1 1 0 0 1 1-1z" fill="#5b96e6"/>
  <path d="M507.300 574.600h3.200" stroke="#2b4f8a" stroke-width="1"/>
  <!-- marker bin / comp button -->
  <path d="M1185.800 586h10.600v8l-5.300 4.300-5.300-4.300z" fill="#c9c9c9"/>
  <g fill="#cfcfcf"><path d="M1190.500 606.300h5.800v6.400h-5.800z"/><path d="M1184 612.300l6.800-7" stroke="#cfcfcf" stroke-width="1.200" fill="none"/><circle cx="1188.800" cy="613.200" r="2.500" fill="#272727" stroke="#cfcfcf" stroke-width="1.200"/></g>
  <!-- bottom bar icons -->
  <g stroke="#4c8fea" stroke-width="1.100"><rect x="7.500" y="777" width="6.500" height="6.500" rx="1" fill="#222"/><rect x="10.500" y="780" width="6.500" height="6.500" rx="1" fill="#2c4f86"/></g>
  <g stroke="#c6c6c6" stroke-width="1.100"><circle cx="27.500" cy="780.500" r="3.300"/><rect x="28.500" y="781.500" width="5.500" height="5.500" fill="#222"/></g>
  <g stroke="#c6c6c6" stroke-width="1.200"><path d="M43.500 776.500c2 1.500 2 3 0 4.500s-2 3.500 0 5.500M48.500 776.500c-2 1.500-2 3 0 4.500s2 3.500 0 5.500"/><path d="M42 781h8" stroke-width="2.400"/></g>
  <path d="M508.500 784l3-3 3 3z" fill="#c6c6c6"/>
  <path d="M535 782h36" stroke="#555555" stroke-width="1.300"/>
  <circle cx="530.700" cy="782" r="3.200" stroke="#c6c6c6" stroke-width="1.300" fill="#222"/>
  <path d="M582 785l4.500-5 3 3 2-2 4 4z" fill="#c6c6c6"/>
</svg>
<!--TL-END-->
<!-- ===== WATERMARK ===== -->
<div class="t" style="left:877.600px;top:717.800px;height:56px;line-height:56px;font-size:49.400px;font-weight:bold;color:#868686;transform:scaleY(1.040);transform-origin:0 46px">C4DCG.COM</div>
</body>
</html>
